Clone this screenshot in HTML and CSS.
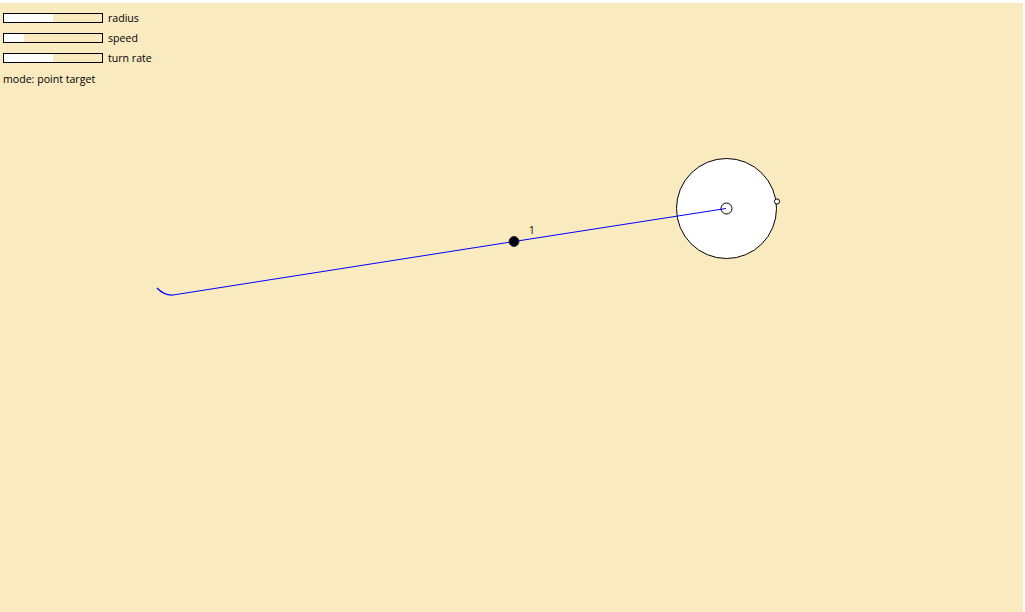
FILE: index.html
```html
<!DOCTYPE html>
<html>
<head>
<meta charset="utf-8">
<link rel="stylesheet" href="styles.css">
</head>
<body>
<div class="stage">
  <svg class="scene" width="1023" height="609" viewBox="0 3 1023 609">
    <circle cx="726.5" cy="208.5" r="50" fill="#fff" stroke="#000" stroke-width="1"/>
    <polyline points="726,208.5 514,241.5 173,295" fill="none" stroke="#0000ff" stroke-width="1"/>
    <path d="M173,295 Q164,295.5 157,288" fill="none" stroke="#0000ff" stroke-width="1.2"/>
    <circle cx="726.5" cy="208.5" r="5.5" fill="none" stroke="#000" stroke-width="1"/>
    <circle cx="777" cy="201.5" r="2.6" fill="#fff" stroke="#000" stroke-width="1"/>
    <circle cx="514" cy="241.5" r="5" fill="#000010" stroke="#333" stroke-width="1"/>
    <text x="529" y="234" class="lbl">1</text>
  </svg>
  <div class="controls">
    <div class="row"><div class="bar"><div class="fill" style="width:50%"></div></div><span>radius</span></div>
    <div class="row"><div class="bar"><div class="fill" style="width:20%"></div></div><span>speed</span></div>
    <div class="row"><div class="bar"><div class="fill" style="width:50%"></div></div><span>turn rate</span></div>
    <div class="mode">mode: point target</div>
  </div>
</div>
</body>
</html>
```
FILE: styles.css
```css
html, body {
  margin: 0;
  padding: 0;
  background: #fff;
  overflow: hidden;
}
.stage {
  position: relative;
  margin-top: 3px;
  width: 1023px;
  height: 609px;
  background: #faeac0;
  font-family: "Open Sans", "Noto Sans", sans-serif;
  font-size: 10.6px;
  color: #000;
}
.scene {
  position: absolute;
  left: 0;
  top: 0;
}
.lbl {
  font-family: "Open Sans", "Noto Sans", sans-serif;
  font-size: 10px;
  fill: #000;
}
.controls {
  position: relative;
  padding: 8px 0 0 3px;
  display: flex;
  flex-direction: column;
  gap: 6px;
}
.row {
  display: flex;
  align-items: center;
  gap: 5px;
  height: 14px;
}
.bar {
  width: 98px;
  height: 8px;
  border: 1px solid #000;
  background: #faeac0;
}
.fill {
  height: 100%;
  background: #fff;
}
.mode {
  line-height: 14px;
  margin-top: 1px;
}
```
